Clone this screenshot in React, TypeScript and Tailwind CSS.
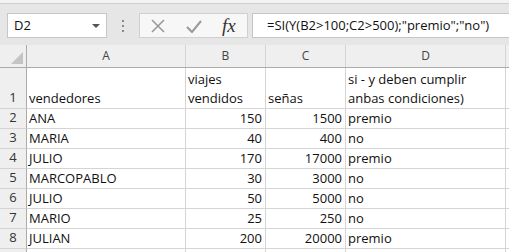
const COLS = [
  { key: 'A', w: 'w-[159px]' },
  { key: 'B', w: 'w-[80px]' },
  { key: 'C', w: 'w-[80px]' },
  { key: 'D', w: 'w-[160px]' },
]

const ROWS: Array<[string, number, number, string]> = [
  ['ANA', 150, 1500, 'premio'],
  ['MARIA', 40, 400, 'no'],
  ['JULIO', 170, 17000, 'premio'],
  ['MARCOPABLO', 30, 3000, 'no'],
  ['JULIO', 50, 5000, 'no'],
  ['MARIO', 25, 250, 'no'],
  ['JULIAN', 200, 20000, 'premio'],
]

const cell = 'border-r border-b border-[#d4d4d4] shrink-0 overflow-hidden whitespace-nowrap'

function RowHead({ n, h }: { n: string; h: string }) {
  return (
    <div className={`w-[27px] ${h} shrink-0 bg-[#efefef] border-r border-b border-r-[#ababab] border-b-[#d4d4d4] flex items-end justify-center pb-[1px] text-[13px] text-[#333]`}>
      {n}
    </div>
  )
}

export default function App() {
  return (
    <div className="w-[509px] h-[252px] overflow-hidden bg-white text-[#111]" style={{ fontFamily: '"Open Sans", sans-serif' }}>
      {/* formula bar */}
      <div className="h-[45px] bg-[#e6e6e6] border-t-[3px] border-[#f3f3f3] relative">
        <div className="absolute top-0 left-0 right-0 h-px bg-[#cfcfcf]" />
        <div className="flex pt-[10px] h-full items-start">
          <div className="ml-[7px] w-[100px] h-[25px] bg-white border border-[#c6c6c6] flex items-center pl-[6px] pr-[6px] text-[13px]">
            <span className="flex-1">D2</span>
            <span className="w-0 h-0 border-l-[4px] border-r-[4px] border-t-[4px] border-l-transparent border-r-transparent border-t-[#555]" />
          </div>
          <div className="w-[32px] h-[25px] flex flex-col items-center justify-center gap-[3px]">
            <span className="w-[2px] h-[2px] bg-[#8a8a8a]" />
            <span className="w-[2px] h-[2px] bg-[#8a8a8a]" />
            <span className="w-[2px] h-[2px] bg-[#8a8a8a]" />
          </div>
          <div className="w-[109px] h-[25px] bg-[#f7f7f7] border border-[#d0d0d0] flex items-center">
            <svg width="16" height="16" viewBox="0 0 16 16" className="ml-[10px]">
              <path d="M2 2 L14 14 M14 2 L2 14" stroke="#9a9a9a" strokeWidth="1.6" fill="none" />
            </svg>
            <svg width="18" height="16" viewBox="0 0 18 16" className="ml-[19px]">
              <path d="M2 9 L7 14 L16 3" stroke="#9a9a9a" strokeWidth="2" fill="none" />
            </svg>
            <span className="ml-[19px] text-[19px] italic text-[#333] leading-none" style={{ fontFamily: '"Liberation Serif", serif' }}>fx</span>
          </div>
          <div className="ml-[4px] flex-1 h-[25px] bg-white border border-[#c6c6c6] border-r-0 flex items-center pl-[14px] text-[13px]">
            =SI(Y(B2&gt;100;C2&gt;500);"premio";"no")
          </div>
        </div>
      </div>

      {/* column headers */}
      <div className="flex h-[23px] bg-[#efefef] border-b border-[#ababab]">
        <div className="w-[27px] shrink-0 border-r border-[#ababab] relative">
          <svg width="12" height="12" viewBox="0 0 12 12" className="absolute right-[3px] bottom-[3px]">
            <path d="M12 0 L12 12 L0 12 Z" fill="#c4c4c4" />
          </svg>
        </div>
        {COLS.map(c => (
          <div key={c.key} className={`${c.w} shrink-0 border-r border-[#d4d4d4] flex items-center justify-center text-[12px] text-[#444]`}>
            {c.key}
          </div>
        ))}
        <div className="flex-1" />
      </div>

      {/* row 1 */}
      <div className="flex">
        <RowHead n="1" h="h-[41px]" />
        <div className={`${cell} w-[159px] h-[41px] flex items-end pl-[2px] text-[13px] leading-[19px]`}>vendedores</div>
        <div className={`${cell} w-[80px] h-[41px] flex items-end pl-[2px] text-[13px] leading-[19px]`}>
          <div>viajes<br />vendidos</div>
        </div>
        <div className={`${cell} w-[80px] h-[41px] flex items-end pl-[2px] text-[13px] leading-[19px]`}>señas</div>
        <div className={`${cell} w-[160px] h-[41px] flex items-end pl-[2px] text-[13px] leading-[19px]`}>
          <div>si - y deben cumplir<br />anbas condiciones)</div>
        </div>
        <div className="flex-1 border-b border-[#d4d4d4]" />
      </div>

      {ROWS.map((r, i) => (
        <div key={i} className="flex">
          <RowHead n={String(i + 2)} h="h-[20px]" />
          <div className={`${cell} w-[159px] h-[20px] pl-[2px] text-[13px] leading-[19px]`}>{r[0]}</div>
          <div className={`${cell} w-[80px] h-[20px] pr-[3px] text-right text-[13px] leading-[19px]`}>{r[1]}</div>
          <div className={`${cell} w-[80px] h-[20px] pr-[3px] text-right text-[13px] leading-[19px]`}>{r[2]}</div>
          <div className={`${cell} w-[160px] h-[20px] pl-[2px] text-[13px] leading-[19px]`}>{r[3]}</div>
          <div className="flex-1 h-[20px] border-b border-[#d4d4d4]" />
        </div>
      ))}
      <div className="flex">
        <RowHead n="" h="h-[20px]" />
        <div className={`${cell} w-[159px] h-[20px]`} />
        <div className={`${cell} w-[80px] h-[20px]`} />
        <div className={`${cell} w-[80px] h-[20px]`} />
        <div className={`${cell} w-[160px] h-[20px]`} />
      </div>
    </div>
  )
}
